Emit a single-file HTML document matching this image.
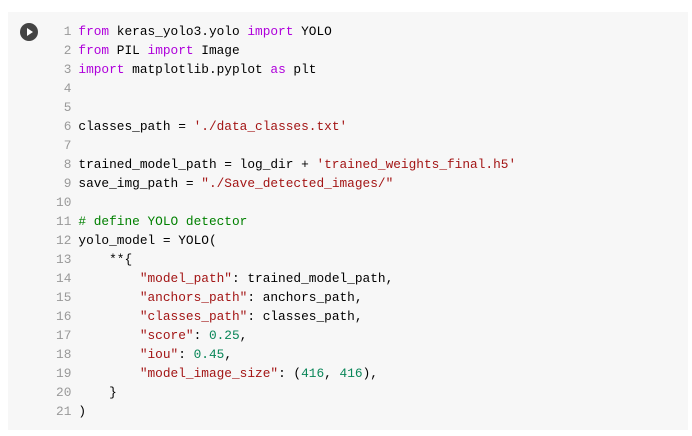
<!DOCTYPE html>
<html><head><style>
body{margin:0;background:#fff;width:692px;height:436px;overflow:hidden}
.panel{position:absolute;left:8px;top:12px;width:680px;height:418px;background:#f7f7f7}
.run{position:absolute;left:20px;top:23px;width:18px;height:18px;border-radius:50%;background:#444}
.run:after{content:"";position:absolute;left:7px;top:5px;border-left:6px solid #fff;border-top:4px solid transparent;border-bottom:4px solid transparent}
pre{position:absolute;left:56px;top:22px;margin:0;font-family:"Liberation Mono",monospace;font-size:12.8px;line-height:19px;color:#000}
.n{color:#999;display:inline-block;width:15.4px;text-align:right;margin-right:7px}
.k{color:#af00db}.s{color:#a31515}.d{color:#098658}.c{color:#008000}
</style></head><body>
<div class="panel"></div><div class="run"></div>
<pre><span class="n">1</span><span class="k">from</span> keras_yolo3.yolo <span class="k">import</span> YOLO
<span class="n">2</span><span class="k">from</span> PIL <span class="k">import</span> Image
<span class="n">3</span><span class="k">import</span> matplotlib.pyplot <span class="k">as</span> plt
<span class="n">4</span>
<span class="n">5</span>
<span class="n">6</span>classes_path = <span class="s">'./data_classes.txt'</span>
<span class="n">7</span>
<span class="n">8</span>trained_model_path = log_dir + <span class="s">'trained_weights_final.h5'</span>
<span class="n">9</span>save_img_path = <span class="s">"./Save_detected_images/"</span>
<span class="n">10</span>
<span class="n">11</span><span class="c"># define YOLO detector</span>
<span class="n">12</span>yolo_model = YOLO(
<span class="n">13</span>    **{
<span class="n">14</span>        <span class="s">"model_path"</span>: trained_model_path,
<span class="n">15</span>        <span class="s">"anchors_path"</span>: anchors_path,
<span class="n">16</span>        <span class="s">"classes_path"</span>: classes_path,
<span class="n">17</span>        <span class="s">"score"</span>: <span class="d">0.25</span>,
<span class="n">18</span>        <span class="s">"iou"</span>: <span class="d">0.45</span>,
<span class="n">19</span>        <span class="s">"model_image_size"</span>: (<span class="d">416</span>, <span class="d">416</span>),
<span class="n">20</span>    }
<span class="n">21</span>)</pre>
</body></html>
